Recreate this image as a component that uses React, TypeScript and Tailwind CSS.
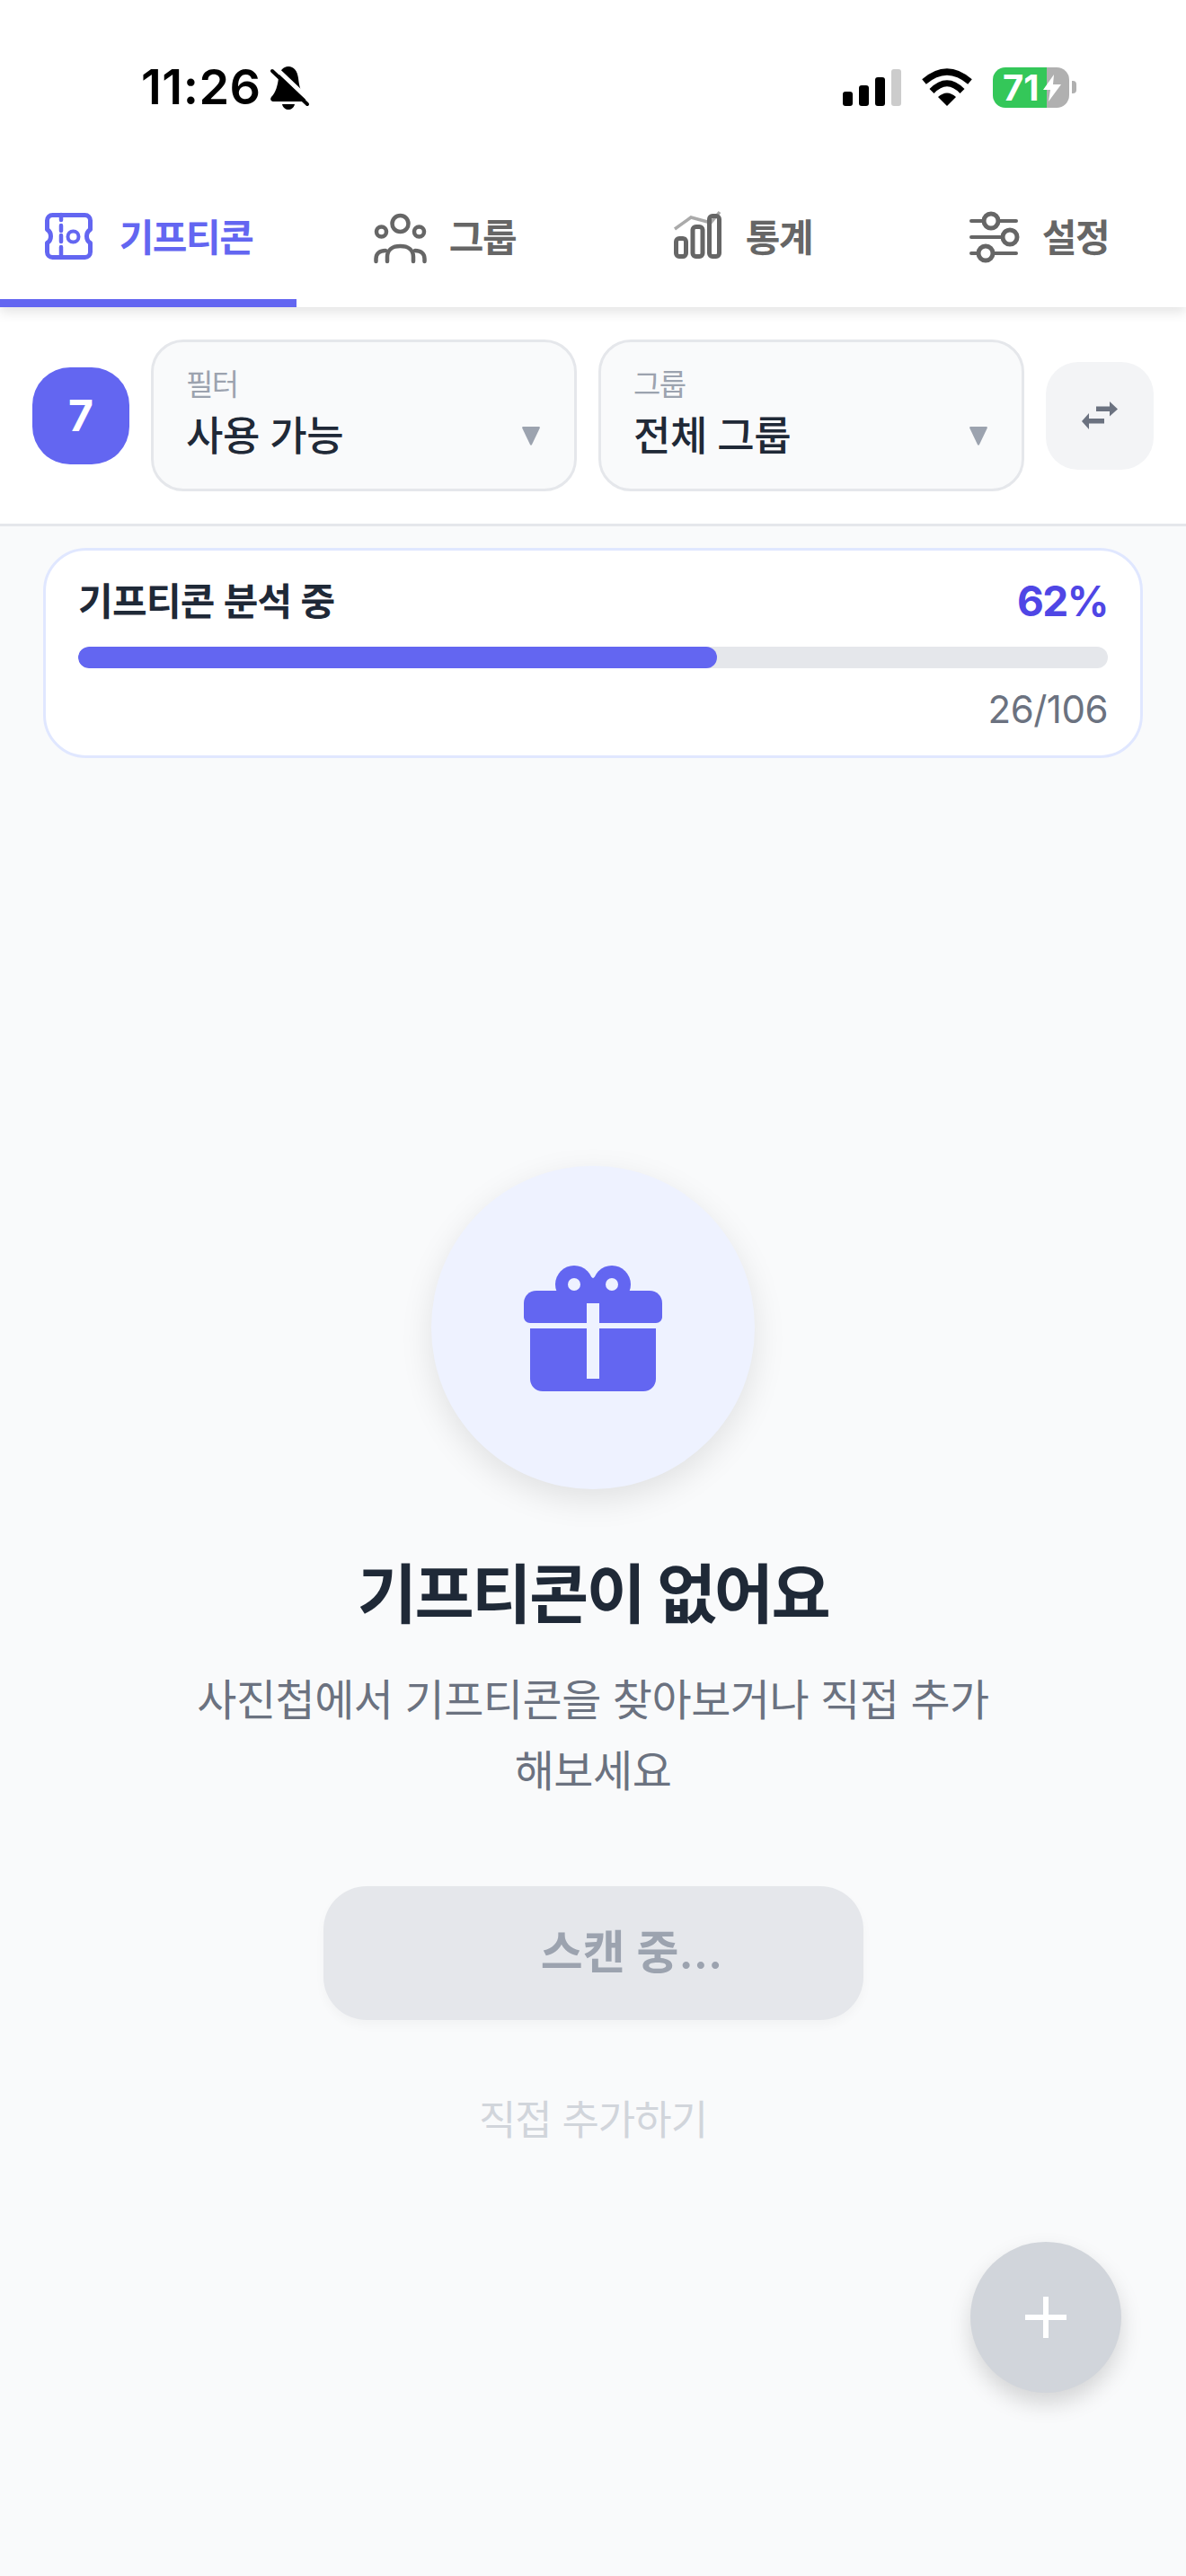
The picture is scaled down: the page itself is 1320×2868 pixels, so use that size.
import React from "react";

function BellOff() {
  return (
    <svg width="65" height="65" viewBox="0 0 65 65" className="-ml-[15px] -mr-[10px]">
      <path d="M32 9C38 9 42 14 43 22C44 32 46 38 51 44C52 47 50 48 48 48H16C13 48 11 46 13 43C18 38 20 30 21 22C22 14 26 9 32 9Z" fill="#000" />
      <path d="M25 51H39C38 55 35 57 32 57C29 57 26 55 25 51Z" fill="#000" />
      <path d="M17 10L57 48" stroke="#fff" strokeWidth="5" />
      <path d="M14 14L53 51" stroke="#000" strokeWidth="4" strokeLinecap="round" />
    </svg>
  );
}

function Signal() {
  return (
    <svg width="65" height="41" viewBox="0 0 65 41" fill="#000">
      <rect x="0" y="25" width="11" height="16" rx="3" />
      <rect x="18" y="18" width="11" height="23" rx="3" />
      <rect x="36" y="9" width="11" height="32" rx="3" />
      <rect x="54" y="0" width="11" height="41" rx="3" fill="#cccccc" />
    </svg>
  );
}

function Wifi() {
  return (
    <svg width="58" height="42" viewBox="0 0 58 42" fill="none" stroke="#000" strokeWidth="7">
      <path d="M3.5 15Q29 -7 54.500 15" />
      <path d="M12 25.500Q29 8 46 25.500" />
      <path d="M29 42L19 32Q29 23 39 32Z" fill="#000" stroke="none" />
    </svg>
  );
}

function Battery() {
  return (
    <div className="flex items-center gap-[3px]">
      <div className="relative flex h-[45px] w-[85px]">
        <div className="h-full w-[60px] rounded-l-[14px] bg-[#34c759]" />
        <div className="h-full w-[25px] rounded-r-[14px] bg-[#b0b0b0]" />
        <span className="absolute left-[11px] top-0 text-[40px] font-bold leading-[45px] text-white">71</span>
        <svg width="20" height="30" viewBox="0 0 20 30" className="absolute left-[56px] top-[8px]" fill="#fff">
          <path d="M12 0L0 17H8L6 30L20 11H11Z" />
        </svg>
      </div>
      <div className="h-[14px] w-[5px] rounded-r-[4px] bg-[#b0b0b0]" />
    </div>
  );
}

function TicketIcon() {
  return (
    <svg width="80" height="80" viewBox="0 0 80 80" fill="none" stroke="#6366f1" strokeLinecap="round" strokeLinejoin="round">
      <path d="M19.500 14.500H55.500C59 14.500 61.500 17 61.500 20.500V30.500C59 32 57.500 35 57.500 38C57.500 41 59 44 61.500 45.500V55.500C61.500 59 59 61.500 55.500 61.500H19.500C16 61.500 13.500 59 13.500 55.500V45.500C16 44 17.500 41 17.500 38C17.500 35 16 32 13.500 30.500V20.500C13.500 17 16 14.500 19.500 14.500Z" strokeWidth="5" />
      <path d="M29 14V20M29 26V32M29 37V44M29 50V60" strokeWidth="4.500" />
      <circle cx="42.500" cy="38.500" r="6" strokeWidth="4" />
    </svg>
  );
}

function GroupIcon() {
  return (
    <svg width="80" height="80" viewBox="0 0 80 80" fill="none" stroke="#666666" strokeWidth="4.500" strokeLinecap="round">
      <circle cx="39.500" cy="24" r="9" />
      <circle cx="18.500" cy="33" r="5.500" />
      <circle cx="60.500" cy="33" r="5.500" />
      <path d="M25 66V61C25 53 31 49 39.500 49C48 49 54 53 54 61V66" />
      <path d="M12.500 66V63C12.500 57 17 54 23 54" />
      <path d="M66.500 66V63C66.500 57 62 54 56 54" />
    </svg>
  );
}

function StatsIcon() {
  return (
    <svg width="80" height="80" viewBox="0 0 80 80" fill="none">
      <path d="M15 30L33 17L55 23L65 11" stroke="#aaaaaa" strokeWidth="3.500" />
      <g stroke="#666666" strokeWidth="5">
        <rect x="16.500" y="40.500" width="11" height="20" rx="3.500" />
        <rect x="35" y="27.500" width="11" height="33" rx="3.500" />
        <rect x="53.500" y="15.500" width="11" height="45" rx="3.500" />
      </g>
    </svg>
  );
}

function SlidersIcon() {
  return (
    <svg width="80" height="80" viewBox="0 0 80 80" fill="#fff" stroke="#666666">
      <g strokeWidth="4" strokeLinecap="round">
        <path d="M15 21H65" />
        <path d="M15 39H65" />
        <path d="M15 57H65" />
      </g>
      <g strokeWidth="5">
        <circle cx="37" cy="21" r="8" />
        <circle cx="58" cy="39" r="8" />
        <circle cx="31" cy="57" r="8" />
      </g>
    </svg>
  );
}

function SwapIcon() {
  return (
    <svg width="40" height="31" viewBox="0 0 40 31" fill="#6b7280">
      <path d="M16 5.500H31V0L40 8.500L31 16.500V11H16Z" />
      <path d="M25 19H8V13L0 22L8 31V24.500H25Z" />
    </svg>
  );
}

function Caret() {
  return (
    <svg width="20" height="21" viewBox="0 0 20 21" fill="#9ca3af" className="mb-[48px] shrink-0">
      <path d="M1 0H19C20 0 20 1 19.600 2L11 20C10.500 21 9.500 21 9 20L0.400 2C0 1 0 0 1 0Z" />
    </svg>
  );
}

function GiftIcon() {
  return (
    <svg width="154" height="141" viewBox="0 0 154 141" fill="#6366f1">
      <circle cx="56" cy="22" r="21" />
      <circle cx="98" cy="22" r="21" />
      <path d="M65 8L77 15L89 8V43H65Z" />
      <path d="M14 29H140C148 29 154 35 154 43V58C154 62 151 65 147 65H7C3 65 0 62 0 58V43C0 35 6 29 14 29Z" />
      <path d="M7 71H147V127C147 135 141 141 133 141H21C13 141 7 135 7 127Z" />
      <circle cx="56" cy="22" r="7" fill="#eef2ff" />
      <circle cx="98" cy="22" r="7" fill="#eef2ff" />
      <rect x="70" y="43" width="14" height="84" fill="#eef2ff" />
    </svg>
  );
}

function Tab({ icon, label, active }: { icon: React.ReactNode; label: string; active?: boolean }) {
  return (
    <div className={`flex flex-1 items-center justify-center gap-[14px] pr-[10px] pt-[10px] ${active ? "h-[156px] border-b-[9px] border-[#6366f1]" : "h-[147px]"}`}>
      {icon}
      <span className={`text-[42px] font-semibold leading-[60px] tracking-[-1.500px] ${active ? "text-[#6366f1]" : "text-[#666666]"}`}>{label}</span>
    </div>
  );
}

function Picker({ label, value }: { label: string; value: string }) {
  return (
    <div className="flex h-[169px] flex-1 items-end justify-between rounded-[36px] border-[3px] border-[#e5e7eb] bg-[#f9fafb] pl-[36px] pr-[38px]">
      <div className="flex h-full flex-col pt-[26px]">
        <span className="text-[33px] leading-[42px] tracking-[-1.500px] text-[#9ca3af]">{label}</span>
        <span className="mt-[4px] text-[45px] font-medium leading-[66px] tracking-[-0.500px] text-[#1f2937]">{value}</span>
      </div>
      <Caret />
    </div>
  );
}

export default function App() {
  return (
    <div className="relative flex h-[2868px] w-[1320px] flex-col overflow-hidden bg-[#f9fafb] font-[Inter,'Noto_Sans_CJK_KR',sans-serif]">
      <header className="relative z-10 bg-white shadow-[0_6px_12px_rgba(0,0,0,0.1)]">
        {/* status bar */}
        <div className="flex h-[186px] items-start justify-between pl-[157px] pr-[122px] pt-[73px]">
          <div className="flex h-[48px] items-center gap-[13px]">
            <span className="text-[54px] font-semibold leading-[48px] tracking-[0.500px] text-black">11:26</span>
            <BellOff />
          </div>
          <div className="flex h-[48px] items-center gap-[22px]">
            <Signal />
            <Wifi />
            <Battery />
          </div>
        </div>
        <nav className="flex h-[156px] items-start">
          <Tab icon={<TicketIcon />} label="기프티콘" active />
          <Tab icon={<GroupIcon />} label="그룹" />
          <Tab icon={<StatsIcon />} label="통계" />
          <Tab icon={<SlidersIcon />} label="설정" />
        </nav>
      </header>

      {/* filter row */}
      <div className="flex items-center gap-[24px] border-b-[3px] border-[#e5e7eb] bg-white p-[36px]">
        <div className="flex h-[108px] w-[108px] shrink-0 items-center justify-center rounded-[42px] bg-[#6366f1] text-[48px] font-bold text-white">7</div>
        <Picker label="필터" value="사용 가능" />
        <Picker label="그룹" value="전체 그룹" />
        <button className="flex h-[120px] w-[120px] shrink-0 items-center justify-center rounded-[36px] bg-[#f3f4f6]">
          <SwapIcon />
        </button>
      </div>

      {/* progress */}
      <div className="mx-[48px] mt-[24px] rounded-[48px] border-[3px] border-[#e0e7ff] bg-white px-[36px] pb-[24px] pt-[26px]">
        <div className="flex h-[60px] items-center justify-between">
          <span className="text-[42px] font-semibold tracking-[-0.700px] text-[#1f2937]">기프티콘 분석 중</span>
          <span className="text-[46px] font-bold tracking-[-1.500px] text-[#4f46e5]">62%</span>
        </div>
        <div className="mt-[21px] h-[24px] overflow-hidden rounded-[12px] bg-[#e5e7eb]">
          <div className="h-full w-[62%] rounded-[12px] bg-[#6366f1]" />
        </div>
        <div className="mt-[19px] text-right text-[42px] leading-[54px] tracking-[-0.500px] text-[#6b7280]">26/106</div>
      </div>

      {/* empty state */}
      <div className="mt-[454px] flex flex-col items-center">
        <div className="flex h-[360px] w-[360px] items-center justify-center rounded-full bg-[#eef2ff] shadow-[0_12px_36px_rgba(0,0,0,0.1)]">
          <GiftIcon />
        </div>
        <h1 className="mt-[63px] text-[72px] font-bold leading-[108px] tracking-[-2.500px] text-[#1f2937]">기프티콘이 없어요</h1>
        <p className="mt-[24px] w-[900px] text-center text-[48px] leading-[79px] tracking-[-0.500px] text-[#6b7280]">사진첩에서 기프티콘을 찾아보거나 직접 추가해보세요</p>
        <button className="mt-[89px] flex h-[149px] w-[601px] items-center justify-center rounded-[48px] bg-[#e5e7eb] pl-[86px] text-[51px] font-semibold text-[#9ca3af] shadow-[0_6px_12px_rgba(0,0,0,0.03)]">스캔 중...</button>
        <div className="mt-[82px] text-[45px] leading-[60px] tracking-[-1px] text-[#d1d5db]">직접 추가하기</div>
      </div>

      {/* fab */}
      <button className="absolute bottom-[204px] right-[72px] flex h-[168px] w-[168px] items-center justify-center rounded-full bg-[#d1d5db] shadow-[0_12px_24px_rgba(0,0,0,0.15)]">
        <svg width="46" height="46" viewBox="0 0 46 46" fill="#fff">
          <rect x="20" y="0" width="6" height="46" />
          <rect x="0" y="20" width="46" height="6" />
        </svg>
      </button>
    </div>
  );
}
